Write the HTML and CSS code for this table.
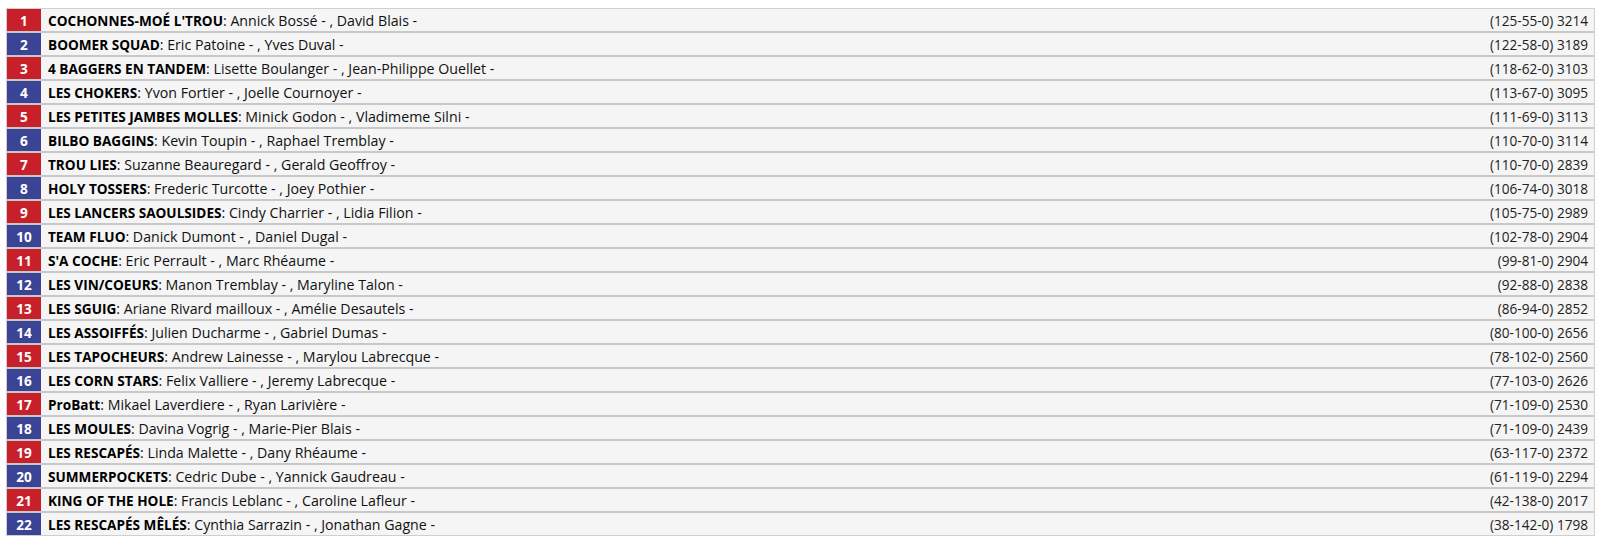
FILE: index.html
```html
<!DOCTYPE html>
<html>
<head>
<meta charset="utf-8">
<link rel="stylesheet" href="styles.css">
</head>
<body>
<div class="board">
  <div class="row"><span class="rank red">1</span><span class="team"><b>COCHONNES-MOÉ L'TROU</b>: Annick Bossé - , David Blais -</span><span class="score">(125-55-0) 3214</span></div>
  <div class="row"><span class="rank blue">2</span><span class="team"><b>BOOMER SQUAD</b>: Eric Patoine - , Yves Duval -</span><span class="score">(122-58-0) 3189</span></div>
  <div class="row"><span class="rank red">3</span><span class="team"><b>4 BAGGERS EN TANDEM</b>: Lisette Boulanger - , Jean-Philippe Ouellet -</span><span class="score">(118-62-0) 3103</span></div>
  <div class="row"><span class="rank blue">4</span><span class="team"><b>LES CHOKERS</b>: Yvon Fortier - , Joelle Cournoyer -</span><span class="score">(113-67-0) 3095</span></div>
  <div class="row"><span class="rank red">5</span><span class="team"><b>LES PETITES JAMBES MOLLES</b>: Minick Godon - , Vladimeme Silni -</span><span class="score">(111-69-0) 3113</span></div>
  <div class="row"><span class="rank blue">6</span><span class="team"><b>BILBO BAGGINS</b>: Kevin Toupin - , Raphael Tremblay -</span><span class="score">(110-70-0) 3114</span></div>
  <div class="row"><span class="rank red">7</span><span class="team"><b>TROU LIES</b>: Suzanne Beauregard - , Gerald Geoffroy -</span><span class="score">(110-70-0) 2839</span></div>
  <div class="row"><span class="rank blue">8</span><span class="team"><b>HOLY TOSSERS</b>: Frederic Turcotte - , Joey Pothier -</span><span class="score">(106-74-0) 3018</span></div>
  <div class="row"><span class="rank red">9</span><span class="team"><b>LES LANCERS SAOULSIDES</b>: Cindy Charrier - , Lidia Filion -</span><span class="score">(105-75-0) 2989</span></div>
  <div class="row"><span class="rank blue">10</span><span class="team"><b>TEAM FLUO</b>: Danick Dumont - , Daniel Dugal -</span><span class="score">(102-78-0) 2904</span></div>
  <div class="row"><span class="rank red">11</span><span class="team"><b>S'A COCHE</b>: Eric Perrault - , Marc Rhéaume -</span><span class="score">(99-81-0) 2904</span></div>
  <div class="row"><span class="rank blue">12</span><span class="team"><b>LES VIN/COEURS</b>: Manon Tremblay - , Maryline Talon -</span><span class="score">(92-88-0) 2838</span></div>
  <div class="row"><span class="rank red">13</span><span class="team"><b>LES SGUIG</b>: Ariane Rivard mailloux - , Amélie Desautels -</span><span class="score">(86-94-0) 2852</span></div>
  <div class="row"><span class="rank blue">14</span><span class="team"><b>LES ASSOIFFÉS</b>: Julien Ducharme - , Gabriel Dumas -</span><span class="score">(80-100-0) 2656</span></div>
  <div class="row"><span class="rank red">15</span><span class="team"><b>LES TAPOCHEURS</b>: Andrew Lainesse - , Marylou Labrecque -</span><span class="score">(78-102-0) 2560</span></div>
  <div class="row"><span class="rank blue">16</span><span class="team"><b>LES CORN STARS</b>: Felix Valliere - , Jeremy Labrecque -</span><span class="score">(77-103-0) 2626</span></div>
  <div class="row"><span class="rank red">17</span><span class="team"><b>ProBatt</b>: Mikael Laverdiere - , Ryan Larivière -</span><span class="score">(71-109-0) 2530</span></div>
  <div class="row"><span class="rank blue">18</span><span class="team"><b>LES MOULES</b>: Davina Vogrig - , Marie-Pier Blais -</span><span class="score">(71-109-0) 2439</span></div>
  <div class="row"><span class="rank red">19</span><span class="team"><b>LES RESCAPÉS</b>: Linda Malette - , Dany Rhéaume -</span><span class="score">(63-117-0) 2372</span></div>
  <div class="row"><span class="rank blue">20</span><span class="team"><b>SUMMERPOCKETS</b>: Cedric Dube - , Yannick Gaudreau -</span><span class="score">(61-119-0) 2294</span></div>
  <div class="row"><span class="rank red">21</span><span class="team"><b>KING OF THE HOLE</b>: Francis Leblanc - , Caroline Lafleur -</span><span class="score">(42-138-0) 2017</span></div>
  <div class="row"><span class="rank blue">22</span><span class="team"><b>LES RESCAPÉS MÊLÉS</b>: Cynthia Sarrazin - , Jonathan Gagne -</span><span class="score">(38-142-0) 1798</span></div>
</div>
</body>
</html>
```
FILE: styles.css
```css
html, body {
  margin: 0;
  padding: 0;
  background: #fff;
}
body {
  padding: 8px 10px 0 6px;
  font-family: "Open Sans", "DejaVu Sans", sans-serif;
  font-size: 14.2px;
  color: #111;
}
.board {
  border: 1px solid #cfcfcf;
  background: #f5f5f5;
  display: flex;
  flex-direction: column;
}
.row {
  display: flex;
  align-items: center;
  height: 22px;
  border-top: 2px solid #c8c8c8;
}
.row:first-child {
  border-top: none;
}
.rank {
  width: 34px;
  height: 22px;
  display: flex;
  align-items: center;
  justify-content: center;
  color: #fff;
  font-size: 13.6px;
  font-weight: bold;
  flex: none;
}
.red { background: #c8202a; }
.blue { background: #3b4395; }
.team {
  flex: 1;
  padding-left: 7px;
  white-space: nowrap;
}
.team b {
  font-size: 13.6px;
  font-weight: bold;
  color: #000;
}
.score {
  padding-right: 6px;
  font-size: 13.6px;
  color: #222;
}
```
